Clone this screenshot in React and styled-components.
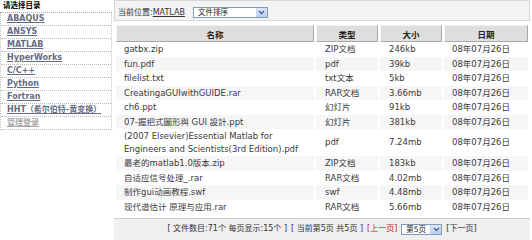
import React from "react";
import styled, { createGlobalStyle } from "styled-components";

const FONT = `"DejaVu Sans", Verdana, "Noto Sans CJK SC", sans-serif`;

const Global = createGlobalStyle`
  html, body { margin: 0; padding: 0; background: #fff; }
  body { font-family: ${FONT}; color: #333; }
`;

const Page = styled.div`
  display: flex;
  align-items: flex-start;
  width: 532px;
  height: 240px;
  overflow: hidden;
`;

const Sidebar = styled.nav`
  width: 112px;
  flex: none;
`;

const SideTitle = styled.div`
  height: 12px;
  line-height: 12px;
  padding-left: 3px;
  font-size: 7.5px;
  font-weight: bold;
  color: #000;
  border-bottom: 1px dotted #aaa;
`;

const SideList = styled.ul`
  list-style: none;
  margin: 0;
  padding: 0;
  border-left: 1px dotted #c4c4c4;
  border-right: 1px dotted #c4c4c4;
`;

const SideItem = styled.li`
  height: 12px;
  line-height: 12px;
  padding-left: 6px;
  border-bottom: 1px dotted #bbb;
  font-size: 8px;
  font-weight: bold;
  white-space: nowrap;
`;

const SideLink = styled.a`
  color: ${(p) => (p.$muted ? "#a8a8a8" : "#666c82")};
  text-decoration: underline;
  cursor: pointer;
`;

const Main = styled.main`
  flex: 1;
  margin: 0 2px;
  display: flex;
  flex-direction: column;
`;

const TopBar = styled.div`
  height: 19px;
  border: 1px solid #d6d6d6;
  background: #f3f3f3;
  display: flex;
  align-items: center;
  padding-left: 3px;
  gap: 8px;
  font-size: 8px;
  color: #333;
`;

const Crumb = styled.span`
  white-space: nowrap;
  padding-top: 2px;
`;

const CrumbLink = styled.a`
  color: #333;
  text-decoration: underline;
`;

const FakeSelect = styled.div`
  box-sizing: border-box;
  width: ${(p) => p.$w}px;
  height: 11px;
  border: 1px solid #7f9db9;
  background: #fff;
  display: flex;
  align-items: center;
  justify-content: space-between;
  padding-left: 4px;
  font-size: 7.5px;
  line-height: 9px;
  color: #222;
  margin-top: ${(p) => p.$mt || 0}px;
`;

const Arrow = styled.span`
  width: 10px;
  height: 9px;
  background: linear-gradient(#dbe6fb, #b9cdf3);
  border-left: 1px solid #c6d4ef;
  display: flex;
  align-items: center;
  justify-content: center;
`;

const Table = styled.table`
  border-collapse: separate;
  border-spacing: 2px 0;
  width: 416px;
  margin-top: 4px;
  table-layout: fixed;
  font-size: 8.5px;
`;

const Th = styled.th`
  box-sizing: border-box;
  width: ${(p) => p.$w}px;
  height: 17px;
  padding: 0;
  background: #dedede;
  border-top: 1px solid #f2f2f2;
  border-left: 1px solid #f2f2f2;
  border-bottom: 1px solid #a9a9a9;
  border-right: 1px solid #a9a9a9;
  font-weight: bold;
  font-size: 8.5px;
  color: #222;
  text-align: center;
`;

const Td = styled.td`
  padding: 1px ${(p) => p.$pr || 8}px 1px ${(p) => p.$pl || 8}px;
  line-height: 12.5px;
  background: ${(p) => (p.$alt ? "#f6f6f6" : "#fff")};
  color: #3a3a3a;
  vertical-align: middle;
  text-align: left;
  white-space: ${(p) => (p.$wrap ? "normal" : "nowrap")};
  overflow: hidden;
`;

const Footer = styled.div`
  margin-top: 4px;
  border-top: 1px solid #cfcfcf;
  background: #efefef;
  height: 30px;
  display: flex;
  justify-content: center;
  align-items: flex-start;
  padding-top: 4px;
  gap: 4px;
  font-size: 8px;
  line-height: 12px;
  color: #333;
  white-space: nowrap;
`;

const Pager = styled.span`
  color: ${(p) => (p.$red ? "#cc2222" : "#333")};
`;

const Chevron = () => (
  <svg width="7" height="5" viewBox="0 0 7 5">
    <path d="M1 1 L3.5 3.5 L6 1" fill="none" stroke="#4a5f8c" strokeWidth="1.4" />
  </svg>
);

const dirs = [
  { label: "ABAQUS" },
  { label: "ANSYS" },
  { label: "MATLAB" },
  { label: "HyperWorks" },
  { label: "C/C++" },
  { label: "Python" },
  { label: "Fortran" },
  { label: "HHT（希尔伯特-黄变换）" },
  { label: "管理登录", muted: true },
];

const files = [
  ["gatbx.zip", "ZIP文档", "246kb"],
  ["fun.pdf", "pdf", "39kb"],
  ["filelist.txt", "txt文本", "5kb"],
  ["CreatingaGUIwithGUIDE.rar", "RAR文档", "3.66mb"],
  ["ch6.ppt", "幻灯片", "91kb"],
  ["07-握把式圖形與 GUI 設計.ppt", "幻灯片", "381kb"],
  ["(2007 Elsevier)Essential Matlab for Engineers and Scientists(3rd Edition).pdf", "pdf", "7.24mb"],
  ["最老的matlab1.0版本.zip", "ZIP文档", "183kb"],
  ["自适应信号处理_.rar", "RAR文档", "4.02mb"],
  ["制作gui动画教程.swf", "swf", "4.48mb"],
  ["现代谱估计 原理与应用.rar", "RAR文档", "5.66mb"],
];

export default function App() {
  return (
    <>
      <Global />
      <Page>
        <Sidebar>
          <SideTitle>请选择目录</SideTitle>
          <SideList>
            {dirs.map((d) => (
              <SideItem key={d.label}>
                <SideLink $muted={d.muted}>{d.label}</SideLink>
              </SideItem>
            ))}
          </SideList>
        </Sidebar>
        <Main>
          <TopBar>
            <Crumb>
              当前位置:<CrumbLink>MATLAB</CrumbLink>
            </Crumb>
            <FakeSelect $w={75} $mt={3}>
              文件排序
              <Arrow>
                <Chevron />
              </Arrow>
            </FakeSelect>
          </TopBar>
          <Table>
            <thead>
              <tr>
                <Th $w={198}>名称</Th>
                <Th $w={62}>类型</Th>
                <Th $w={62}>大小</Th>
                <Th $w={84}>日期</Th>
              </tr>
            </thead>
            <tbody>
              {files.map((f, i) => (
                <tr key={f[0]}>
                  <Td $alt={i % 2 === 1} $wrap>{f[0]}</Td>
                  <Td $alt={i % 2 === 1} $pl={9} $pr={2}>{f[1]}</Td>
                  <Td $alt={i % 2 === 1} $pl={9} $pr={2}>{f[2]}</Td>
                  <Td $alt={i % 2 === 1} $pr={2}>08年07月26日</Td>
                </tr>
              ))}
            </tbody>
          </Table>
          <Footer>
            <Pager>[ 文件数目:71个 每页显示:15个 ]</Pager>
            <Pager>[ 当前第5页 共5页 ]</Pager>
            <Pager $red>[上一页]</Pager>
            <FakeSelect $w={41} $mt={1}>
              第5页
              <Arrow>
                <Chevron />
              </Arrow>
            </FakeSelect>
            <Pager>[下一页]</Pager>
          </Footer>
        </Main>
      </Page>
    </>
  );
}
